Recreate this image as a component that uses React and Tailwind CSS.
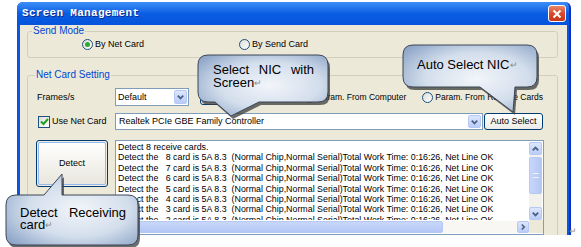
import React from "react";

// XP-style "Screen Management" dialog with three Word callouts over it.

const logLines = [
  "Detect 8 receive cards.",
  "Detect the   8 card is 5A 8.3  (Normal Chip,Normal Serial)Total Work Time: 0:16:26, Net Line OK",
  "Detect the   7 card is 5A 8.3  (Normal Chip,Normal Serial)Total Work Time: 0:16:26, Net Line OK",
  "Detect the   6 card is 5A 8.3  (Normal Chip,Normal Serial)Total Work Time: 0:16:26, Net Line OK",
  "Detect the   5 card is 5A 8.3  (Normal Chip,Normal Serial)Total Work Time: 0:16:26, Net Line OK",
  "Detect the   4 card is 5A 8.3  (Normal Chip,Normal Serial)Total Work Time: 0:16:26, Net Line OK",
  "Detect the   3 card is 5A 8.3  (Normal Chip,Normal Serial)Total Work Time: 0:16:26, Net Line OK",
  "Detect the   2 card is 5A 8.3  (Normal Chip,Normal Serial)Total Work Time: 0:16:26, Net Line OK",
];

function Chevron({ dir = "down" }) {
  const d = {
    down: "M3 4.5 L6 7.5 L9 4.5",
    up: "M3 7.5 L6 4.5 L9 7.5",
    right: "M4.5 3 L7.5 6 L4.5 9",
  }[dir];
  return (
    <svg width="12" height="12" viewBox="0 0 12 12">
      <path d={d} fill="none" stroke="#4d6185" strokeWidth="2" />
    </svg>
  );
}

function ArrowBox({ dir, className = "" }) {
  return (
    <div className={"flex items-center justify-center rounded-[2px] border border-[#b6c9f4] bg-linear-to-b from-[#dde6fd] to-[#b9cdf8] " + className}>
      <Chevron dir={dir} />
    </div>
  );
}

function Radio({ checked, children, className = "" }) {
  return (
    <div className={"flex items-center gap-[2px] whitespace-nowrap " + className}>
      <span className="shrink-0 w-[11px] h-[11px] rounded-full border border-[#1c5180] bg-linear-to-br from-[#dcdcd6] to-white flex items-center justify-center">
        {checked && <span className="w-[5px] h-[5px] rounded-full bg-[#2fa82f]" />}
      </span>
      <span>{children}</span>
    </div>
  );
}

function XpButton({ children, className = "" }) {
  return (
    <div className={"flex items-center justify-center rounded-[3px] border border-[#003c74] bg-linear-to-b from-white to-[#ecebe6] " + className}>
      {children}
    </div>
  );
}

function Callouts() {
  const p1 = "M208,55 H318 Q328,55 328,65 V92 Q328,102 318,102 H259 L231,116 L215,102 H208 Q198,102 198,92 V65 Q198,55 208,55 Z";
  const p2 = "M413,45 H527 Q537,45 537,55 V77 Q537,87 527,87 H515 L513,112 L480,87 H413 Q403,87 403,77 V55 Q403,45 413,45 Z";
  const p3 = "M16,195 H44 L62,174 L62,195 H128 Q138,195 138,205 V235 Q138,245 128,245 H16 Q6,245 6,235 V205 Q6,195 16,195 Z";
  return (
    <svg className="absolute inset-0 pointer-events-none" width="581" height="247" viewBox="0 0 581 247">
      <defs>
        <radialGradient id="cg" cx="55%" cy="50%" r="70%">
          <stop offset="0" stopColor="#f2f5fa" />
          <stop offset="0.55" stopColor="#d3deec" />
          <stop offset="1" stopColor="#8aa2c6" />
        </radialGradient>
      </defs>
      {[p1, p2, p3].map((d, i) => (
        <g key={i}>
          <path d={d} transform="translate(2,3)" fill="#3c3c3c" opacity="0.75" />
          <path d={d} fill="url(#cg)" stroke="#3d4657" strokeWidth="1" />
        </g>
      ))}
    </svg>
  );
}

const mark = <span className="text-[#8a8a8a] text-[9px] align-[1px]">↵</span>;

export default function App() {
  return (
    <div className="relative w-[581px] h-[247px] bg-white overflow-hidden font-['Liberation_Sans',Arial,sans-serif] text-black">
      <div className="ml-[17px] pt-[2px]">
        <div className="w-[554px] h-[233px] rounded-t-[6px] bg-[#0c55e2] border-r-[2px] border-[#0a2fc4] flex flex-col overflow-hidden">
          {/* title bar */}
          <div className="h-[23px] shrink-0 flex items-center justify-between pl-[5px] pr-[3px] bg-linear-to-b from-[#3d8ef6] via-[#0a5ee3] to-[#0653dc]">
            <span className="text-white font-bold text-[11px] tracking-[0.3px] font-['Liberation_Mono',monospace] [text-shadow:1px_1px_0_#0a2a8c]">
              Screen Management
            </span>
            <div className="w-[18px] h-[17px] rounded-[3px] border border-white bg-linear-to-b from-[#e8856a] via-[#d9492a] to-[#c9361a] flex items-center justify-center">
              <svg width="10" height="10" viewBox="0 0 10 10">
                <path d="M1.5 1.5 L8.5 8.5 M8.5 1.5 L1.5 8.5" stroke="white" strokeWidth="2" />
              </svg>
            </div>
          </div>

          {/* client area */}
          <div className="ml-[3px] mr-[2px] flex-1 bg-[#ece9d8] overflow-hidden text-[9px] leading-[11px]">
            <fieldset className="ml-[7px] mr-[9px] h-[33px] border border-[#d0d0bf] rounded-[3px] px-[5px]">
              <legend className="ml-[-1px] px-[1px] text-[#0046d5] text-[10px] leading-[12px]">Send Mode</legend>
              <div className="flex items-center h-[14px]">
                <Radio checked className="ml-[49px]">By Net Card</Radio>
                <Radio className="ml-[95px]">By Send Card</Radio>
              </div>
            </fieldset>

            <fieldset className="mt-[11px] ml-[7px] mr-[9px] h-[200px] border border-[#d0d0bf] rounded-[3px] pl-[8px] pr-[13px]">
              <legend className="ml-[-1px] px-[1px] text-[#0046d5] text-[10px] leading-[12px]">Net Card Setting</legend>

              <div className="mt-[7px] flex items-center h-[18px]">
                <span className="w-[79px] pl-[1px]">Frames/s</span>
                <div className="w-[74px] h-[18px] border border-[#7f9db9] bg-white flex items-center justify-between pl-[2px] pr-[1px]">
                  <span>Default</span>
                  <ArrowBox dir="down" className="w-[13px] h-[14px]" />
                </div>
                <XpButton className="ml-[11px] w-[54px] h-[16px]" />
                <Radio className="ml-[50px] text-[8.5px]">Param. From Computer</Radio>
                <Radio className="ml-[16px] text-[8.5px]">Param. From Receive Cards</Radio>
              </div>

              <div className="mt-[7px] flex items-center h-[17px]">
                <div className="w-[79px] flex items-center gap-[2px] pl-[2px]">
                  <span className="w-[12px] h-[12px] border border-[#1c5180] bg-linear-to-br from-[#dcdcd6] to-white flex items-center justify-center">
                    <svg width="9" height="9" viewBox="0 0 9 9">
                      <path d="M1 4.5 L3.5 7 L8 2" fill="none" stroke="#21a121" strokeWidth="2" />
                    </svg>
                  </span>
                  <span>Use Net Card</span>
                </div>
                <div className="w-[368px] h-[17px] border border-[#7f9db9] bg-white flex items-center justify-between pl-[3px] pr-[1px]">
                  <span>Realtek PCIe GBE Family Controller</span>
                  <ArrowBox dir="down" className="w-[13px] h-[13px]" />
                </div>
                <XpButton className="ml-[1px] w-[59px] h-[17px]">Auto Select</XpButton>
              </div>

              <div className="mt-[10px] flex items-start">
                <div className="w-[79px]">
                  <div className="w-[72px] h-[47px] rounded-[3px] border border-[#003c74] p-[1px] bg-[#ecebe6]">
                    <div className="w-full h-full rounded-[2px] border border-[#98b8ea] bg-linear-to-b from-white to-[#e8e6dd] flex items-center justify-center">
                      Detect
                    </div>
                  </div>
                </div>
                <div className="w-[429px] h-[95px] border border-[#7f9db9] bg-white flex flex-col">
                  <div className="flex flex-1 min-h-0">
                    <div className="flex-1 min-w-0 overflow-hidden pl-[2px] pt-[1px] text-[8.85px] leading-[10.4px] whitespace-pre">
                      {logLines.map((l, i) => (
                        <div key={i}>{l}</div>
                      ))}
                    </div>
                    <div className="w-[13px] mr-[1px] mt-[1px] flex flex-col bg-[#f3f1ec]">
                      <ArrowBox dir="up" className="h-[13px]" />
                      <div className="h-[37px] mt-[2px] rounded-[2px] border border-[#b6c9f4] bg-linear-to-r from-[#c8d6fa] to-[#b4c7f5] flex items-center justify-center">
                        <div className="w-[6px] h-[5px] border-y border-[#eef2fd]" />
                      </div>
                      <div className="flex-1" />
                      <ArrowBox dir="down" className="h-[13px]" />
                    </div>
                  </div>
                  <div className="h-[13px] flex items-center mb-[1px]">
                    <div className="flex-1 flex items-center h-[12px] bg-[#f8f7f3]">
                      <div className="w-[327px] h-[12px] rounded-[2px] border border-[#b6c9f4] bg-linear-to-b from-[#c8d6fa] to-[#b4c7f5]" />
                      <div className="flex-1" />
                      <ArrowBox dir="right" className="w-[12px] h-[12px]" />
                    </div>
                    <div className="w-[14px] h-[13px] bg-[#ece9d8]" />
                  </div>
                </div>
              </div>
            </fieldset>
          </div>
        </div>
      </div>

      <span className="absolute left-[569px] top-[225px] text-[#8a8a8a] text-[9px]">↵</span>

      <Callouts />

      <div className="absolute left-[213px] top-[63px] w-[101px] text-[13px] leading-[13px]">
        <div className="flex justify-between">
          <span>Select</span>
          <span>NIC</span>
          <span>with</span>
        </div>
        <div>Screen{mark}</div>
      </div>
      <div className="absolute left-[417px] top-[58px] text-[13px] leading-[13px] whitespace-nowrap">
        Auto Select NIC{mark}
      </div>
      <div className="absolute left-[20px] top-[207px] w-[106px] text-[13px] leading-[12px]">
        <div className="flex justify-between">
          <span>Detect</span>
          <span>Receiving</span>
        </div>
        <div>card{mark}</div>
      </div>
    </div>
  );
}
